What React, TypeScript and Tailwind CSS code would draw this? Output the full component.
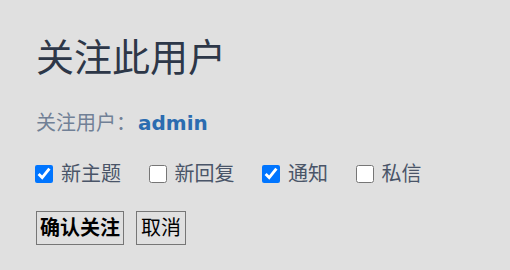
import { useState } from 'react';

const options = [
    { key: 'topic', label: '新主题', checked: true },
    { key: 'reply', label: '新回复', checked: false },
    { key: 'notice', label: '通知', checked: true },
    { key: 'message', label: '私信', checked: false },
];

const App = () => {
    const [checked, setChecked] = useState<Record<string, boolean>>(
        Object.fromEntries(options.map((o) => [o.key, o.checked]))
    );

    return (
        <div
            className="min-h-[270px] w-[510px] bg-[#e0e0e0] px-9 pt-[34px]"
            style={{ fontFamily: '"DejaVu Sans", "Noto Sans CJK SC", sans-serif' }}
        >
            <h1 className="text-[38px] leading-[48px] font-normal text-[#2d3748]">关注此用户</h1>

            <p className="mt-[27px] text-[20px] leading-[28px] text-[#718096]">
                关注用户：<span className="ml-[2px] font-bold text-[#2b6cb0]">admin</span>
            </p>

            {/* notification options */}
            <div className="mt-[23px] -ml-px flex items-center gap-[27.5px]">
                {options.map((o) => (
                    <label key={o.key} className="flex items-center gap-2 text-[20px] leading-[28px] text-[#4a5568]">
                        <input
                            type="checkbox"
                            className="m-0 h-[18px] w-[18px]"
                            checked={checked[o.key]}
                            onChange={() => setChecked({ ...checked, [o.key]: !checked[o.key] })}
                        />
                        {o.label}
                    </label>
                ))}
            </div>

            <div className="mt-[23px] flex gap-3">
                <button className="h-[34px] border border-[#767676] px-[3px] text-[20px] leading-[28px] font-bold text-black">确认关注</button>
                <button className="h-[34px] border border-[#767676] px-[4px] text-[20px] leading-[28px] text-black">取消</button>
            </div>
        </div>
    );
};

export default App;
